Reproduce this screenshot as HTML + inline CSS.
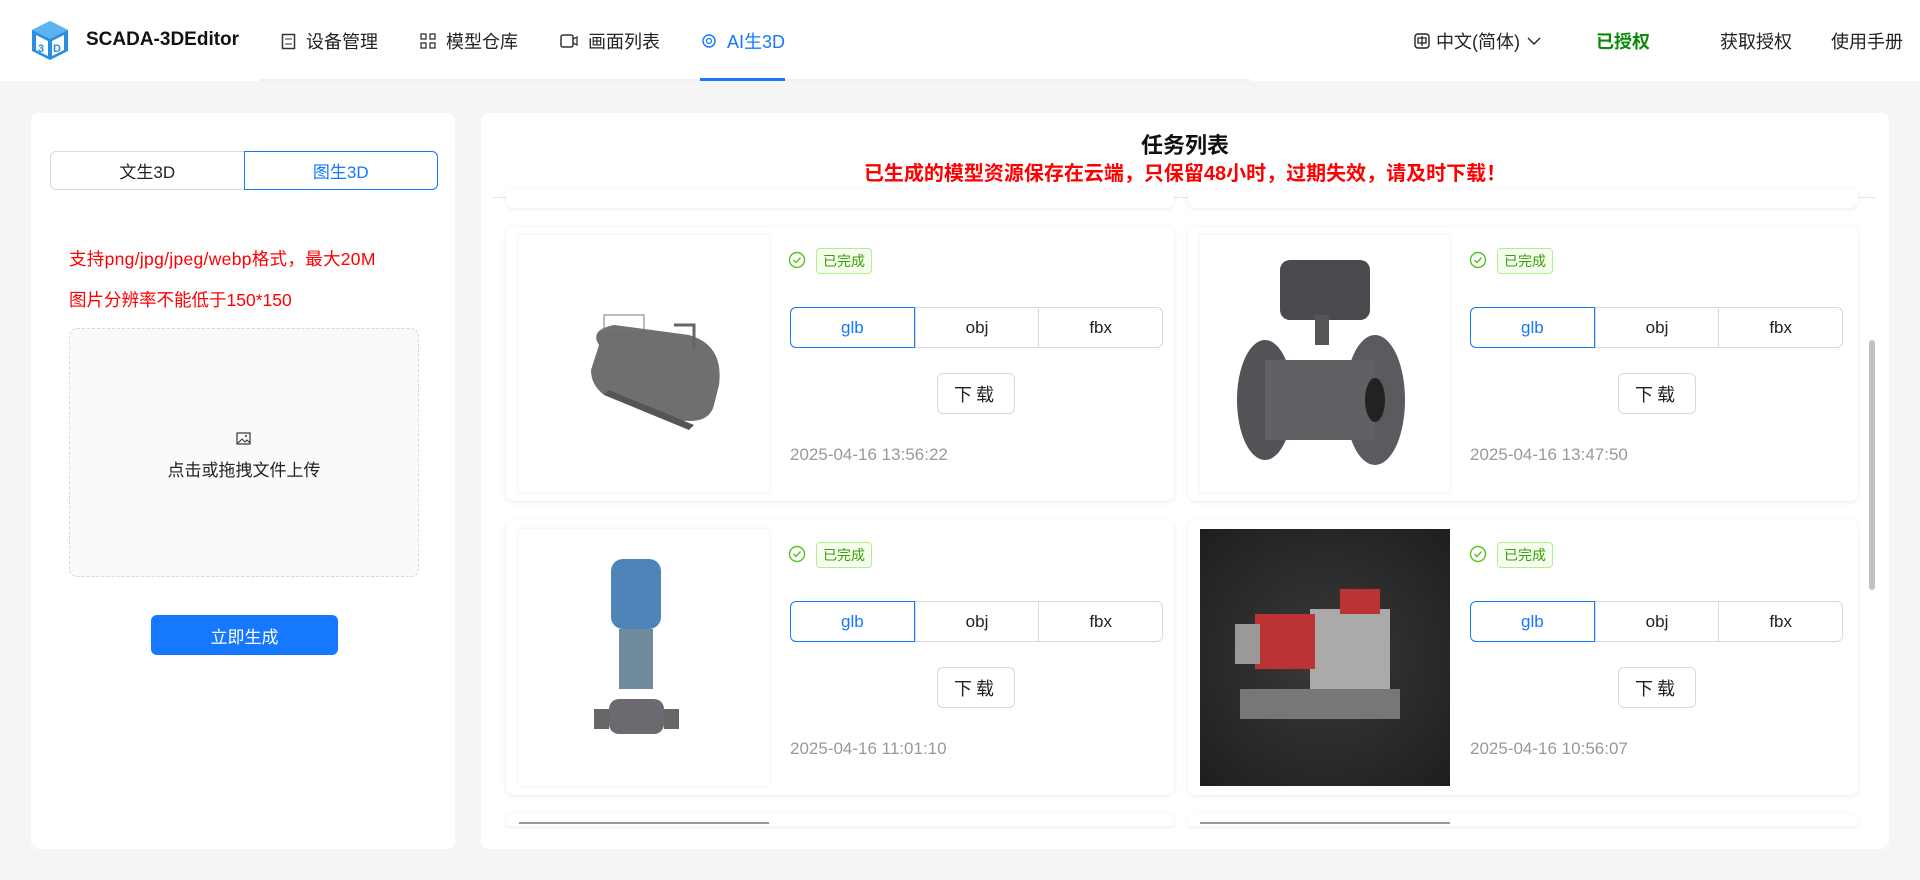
<!DOCTYPE html>
<html><head><meta charset="utf-8">
<style>
*{box-sizing:border-box;margin:0;padding:0}
body{width:1920px;height:880px;background:#f5f5f5;font-family:"Liberation Sans","Noto Sans CJK SC",sans-serif;position:relative;overflow:hidden;color:#222}
.abs{position:absolute}
#hdr{left:0;top:0;width:1920px;height:81px;background:#fff}
.nav{top:28px;font-size:18px;color:#222;display:flex;align-items:center;gap:10px}
.card{background:#fff;border-radius:8px;box-shadow:0 1px 6px rgba(0,0,0,.08)}
.img{background:#fff;box-shadow:0 0 4px rgba(0,0,0,.08)}
.seg{display:flex;border:1px solid #d9d9d9;border-radius:6px;height:41px;width:373px;font-size:17px}
.seg div{flex:1;display:flex;align-items:center;justify-content:center;border-left:1px solid #d9d9d9}
.seg div:first-child{border:1px solid #1677ff;color:#1677ff;border-radius:6px 0 0 6px;margin:-1px 0 -1px -1px}
.tag{font-size:14px;color:#389e0d;background:#f6ffed;border:1px solid #b7eb8f;border-radius:4px;padding:2px 6px}
.btn{border:1px solid #d9d9d9;border-radius:6px;width:78px;height:41px;display:flex;align-items:center;justify-content:center;font-size:18px;letter-spacing:4px;background:#fff}
.date{font-size:17px;color:#999}
</style></head><body>
<div id="hdr" class="abs"></div>
<div class="abs" style="left:260px;top:79px;width:990px;height:2px;background:#f0f0f0"></div>
<svg class="abs" style="left:31px;top:20px" width="38" height="41" viewBox="0 0 38 41"><path d="M19 1 L37 10 L37 31 L19 40 L1 31 L1 10Z" fill="#2b8fe0"/><path d="M19 1 L37 10 L19 19 L1 10Z" fill="#5db3f0"/><path d="M5 15 L17 21 L17 36 L5 30Z M21 21 L33 15 L33 30 L21 36Z" fill="#fff"/><text x="7" y="32" font-size="11" font-weight="bold" fill="#2b8fe0" font-family="Liberation Sans">3</text><text x="22" y="32" font-size="11" font-weight="bold" fill="#2b8fe0" font-family="Liberation Sans">D</text></svg>
<div class="abs" style="left:86px;top:29px;font-size:19px;font-weight:bold;color:#111">SCADA-3DEditor</div>
<div class="abs nav" style="left:281px"><svg width="15" height="17"><rect x="1.5" y="1.5" width="12" height="14" fill="none" stroke="#333" stroke-width="1.5"/><path d="M4 6h7M4 11h7" stroke="#333"/></svg><span>设备管理</span></div>
<div class="abs nav" style="left:420px"><svg width="16" height="16"><rect x="1" y="1" width="5" height="5" fill="none" stroke="#333" stroke-width="1.3"/><rect x="10" y="1" width="5" height="5" fill="none" stroke="#333" stroke-width="1.3"/><rect x="1" y="10" width="5" height="5" fill="none" stroke="#333" stroke-width="1.3"/><rect x="10" y="10" width="5" height="5" fill="none" stroke="#333" stroke-width="1.3"/></svg><span>模型仓库</span></div>
<div class="abs nav" style="left:560px"><svg width="18" height="16"><rect x="1" y="2" width="12" height="12" rx="2" fill="none" stroke="#333" stroke-width="1.5"/><path d="M13 6l4-2v8l-4-2" fill="none" stroke="#333" stroke-width="1.3"/></svg><span>画面列表</span></div>
<div class="abs nav" style="left:701px;color:#1677ff"><svg width="16" height="16"><circle cx="8" cy="8" r="6" fill="none" stroke="#1677ff" stroke-width="1.4"/><circle cx="8" cy="8" r="2.5" fill="none" stroke="#1677ff" stroke-width="1.2"/></svg><span>AI生3D</span></div>
<div class="abs" style="left:700px;top:78px;width:85px;height:3px;background:#1677ff"></div>
<div class="abs nav" style="left:1414px;gap:6px"><svg width="16" height="16"><rect x="1" y="1" width="14" height="14" rx="3" fill="none" stroke="#222" stroke-width="1.4"/><path d="M4 5h8v5H4zM8 3v10" fill="none" stroke="#222" stroke-width="1.3"/></svg><span>中文(简体)</span><svg width="16" height="12"><path d="M2 3l6 6 6-6" fill="none" stroke="#222" stroke-width="1.4"/></svg></div>
<div class="abs nav" style="left:1596px;color:#0a8a0a;font-weight:bold">已授权</div>
<div class="abs nav" style="left:1720px">获取授权</div>
<div class="abs nav" style="left:1831px">使用手册</div>

<div class="abs card" style="left:31px;top:113px;width:424px;height:736px;box-shadow:none"></div>
<div class="abs" style="left:50px;top:151px;width:388px;height:39px;border:1px solid #d9d9d9;border-radius:6px;font-size:17px;display:flex">
<div style="flex:1;display:flex;align-items:center;justify-content:center">文生3D</div>
<div style="flex:1;display:flex;align-items:center;justify-content:center;border:1px solid #1677ff;color:#1677ff;border-radius:0 6px 6px 0;margin:-1px -1px -1px 0">图生3D</div></div>
<div class="abs" style="left:69px;top:246px;font-size:17.5px;color:#f00;letter-spacing:0.3px">支持png/jpg/jpeg/webp格式，最大20M</div>
<div class="abs" style="left:69px;top:287px;font-size:17.5px;color:#f00">图片分辨率不能低于150*150</div>
<div class="abs" style="left:69px;top:328px;width:350px;height:249px;border:1px dashed #d9d9d9;border-radius:8px;background:#fafafa"></div>
<svg class="abs" style="left:236px;top:432px" width="15" height="13"><rect x="1" y="1" width="13" height="11" fill="none" stroke="#333" stroke-width="1.2"/><path d="M2 11l4-4 3 3 2-2 3 3" fill="none" stroke="#333"/><circle cx="10" cy="4" r="1" fill="#333"/></svg>
<div class="abs" style="left:69px;top:456px;width:350px;text-align:center;font-size:17px">点击或拖拽文件上传</div>
<div class="abs" style="left:151px;top:615px;width:187px;height:40px;background:#1677ff;border-radius:6px;color:#fff;font-size:17px;display:flex;align-items:center;justify-content:center">立即生成</div>

<div class="abs card" style="left:481px;top:113px;width:1408px;height:736px;box-shadow:none"></div>
<div class="abs" style="left:481px;top:128px;width:1408px;text-align:center;font-size:22px;font-weight:bold;color:#111">任务列表</div>
<div class="abs" style="left:481px;top:157px;width:1408px;text-align:center;font-size:20px;font-weight:bold;color:#f00">已生成的模型资源保存在云端，只保留48小时，过期失效，请及时下载！</div>
<div class="abs" style="left:493px;top:197px;width:1383px;height:1px;background:#e5e5e5"></div>
<div class="abs" style="left:1869px;top:340px;width:6px;height:250px;background:#c1c1c1;border-radius:3px"></div>
<div class="abs card" style="left:506px;top:190px;width:668px;height:18px;border-radius:0 0 8px 8px"></div>
<div class="abs card" style="left:1188px;top:190px;width:670px;height:18px;border-radius:0 0 8px 8px"></div>
<div class="abs card" style="left:506px;top:814px;width:668px;height:12px;border-radius:8px 8px 0 0"></div>
<div class="abs card" style="left:1188px;top:814px;width:670px;height:12px;border-radius:8px 8px 0 0"></div>
<div class="abs" style="left:519px;top:822px;width:250px;height:2px;background:#999"></div>
<div class="abs" style="left:1200px;top:822px;width:250px;height:2px;background:#999"></div>

<div class="abs card" style="left:506px;top:227px;width:668px;height:274px"></div>
<div class="abs img" style="left:519px;top:235px;width:250px;height:257px"><svg width="250" height="257"><path d="M80 110 Q70 95 95 90 L170 100 Q205 110 200 150 L195 170 Q190 190 160 185 L85 160 Q72 150 72 135Z" fill="#6f6f72"/><path d="M85 160 L170 195 L175 190 L90 155Z" fill="#555"/><rect x="85" y="80" width="40" height="15" fill="none" stroke="#777"/><path d="M155 90h20v25" stroke="#666" stroke-width="3" fill="none"/></svg></div>
<svg class="abs" style="left:788px;top:251px" width="18" height="18"><circle cx="9" cy="9" r="7.5" fill="none" stroke="#52c41a" stroke-width="1.4"/><path d="M5.5 9l2.5 2.5 4.5-5" fill="none" stroke="#52c41a" stroke-width="1.4"/></svg>
<div class="abs tag" style="left:816px;top:248px">已完成</div>
<div class="abs seg" style="left:790px;top:307px"><div>glb</div><div>obj</div><div>fbx</div></div>
<div class="abs btn" style="left:937px;top:373px">下载</div>
<div class="abs date" style="left:790px;top:445px">2025-04-16 13:56:22</div>

<div class="abs card" style="left:1188px;top:227px;width:670px;height:274px"></div>
<div class="abs img" style="left:1200px;top:235px;width:250px;height:257px"><svg width="250" height="257"><rect x="80" y="25" width="90" height="60" rx="10" fill="#4a4a4e"/><rect x="115" y="80" width="14" height="30" fill="#555"/><ellipse cx="65" cy="165" rx="28" ry="60" fill="#525257"/><ellipse cx="175" cy="165" rx="30" ry="65" fill="#5a5a5f"/><rect x="65" y="125" width="110" height="80" fill="#606065"/><ellipse cx="175" cy="165" rx="10" ry="22" fill="#222"/></svg></div>
<svg class="abs" style="left:1469px;top:251px" width="18" height="18"><circle cx="9" cy="9" r="7.5" fill="none" stroke="#52c41a" stroke-width="1.4"/><path d="M5.5 9l2.5 2.5 4.5-5" fill="none" stroke="#52c41a" stroke-width="1.4"/></svg>
<div class="abs tag" style="left:1497px;top:248px">已完成</div>
<div class="abs seg" style="left:1470px;top:307px"><div>glb</div><div>obj</div><div>fbx</div></div>
<div class="abs btn" style="left:1618px;top:373px">下载</div>
<div class="abs date" style="left:1470px;top:445px">2025-04-16 13:47:50</div>

<div class="abs card" style="left:506px;top:520px;width:668px;height:275px"></div>
<div class="abs img" style="left:519px;top:529px;width:250px;height:257px"><svg width="250" height="257"><rect x="92" y="30" width="50" height="70" rx="12" fill="#4f84b8"/><rect x="100" y="100" width="34" height="60" fill="#6f8a9a"/><rect x="90" y="170" width="55" height="35" rx="10" fill="#6a6a70"/><rect x="75" y="180" width="15" height="20" fill="#666"/><rect x="145" y="180" width="15" height="20" fill="#666"/></svg></div>
<svg class="abs" style="left:788px;top:545px" width="18" height="18"><circle cx="9" cy="9" r="7.5" fill="none" stroke="#52c41a" stroke-width="1.4"/><path d="M5.5 9l2.5 2.5 4.5-5" fill="none" stroke="#52c41a" stroke-width="1.4"/></svg>
<div class="abs tag" style="left:816px;top:542px">已完成</div>
<div class="abs seg" style="left:790px;top:601px"><div>glb</div><div>obj</div><div>fbx</div></div>
<div class="abs btn" style="left:937px;top:667px">下载</div>
<div class="abs date" style="left:790px;top:739px">2025-04-16 11:01:10</div>

<div class="abs card" style="left:1188px;top:520px;width:670px;height:275px"></div>
<div class="abs" style="left:1200px;top:529px;width:250px;height:257px;background:radial-gradient(circle at 50% 50%,#3a3a3a,#1e1e1e)"><svg width="250" height="257"><rect x="110" y="80" width="80" height="110" fill="#aaa"/><rect x="55" y="85" width="60" height="55" fill="#b33"/><rect x="35" y="95" width="25" height="40" fill="#999"/><rect x="40" y="160" width="160" height="30" fill="#777"/><rect x="140" y="60" width="40" height="25" fill="#b33"/></svg></div>
<svg class="abs" style="left:1469px;top:545px" width="18" height="18"><circle cx="9" cy="9" r="7.5" fill="none" stroke="#52c41a" stroke-width="1.4"/><path d="M5.5 9l2.5 2.5 4.5-5" fill="none" stroke="#52c41a" stroke-width="1.4"/></svg>
<div class="abs tag" style="left:1497px;top:542px">已完成</div>
<div class="abs seg" style="left:1470px;top:601px"><div>glb</div><div>obj</div><div>fbx</div></div>
<div class="abs btn" style="left:1618px;top:667px">下载</div>
<div class="abs date" style="left:1470px;top:739px">2025-04-16 10:56:07</div>
</body></html>
